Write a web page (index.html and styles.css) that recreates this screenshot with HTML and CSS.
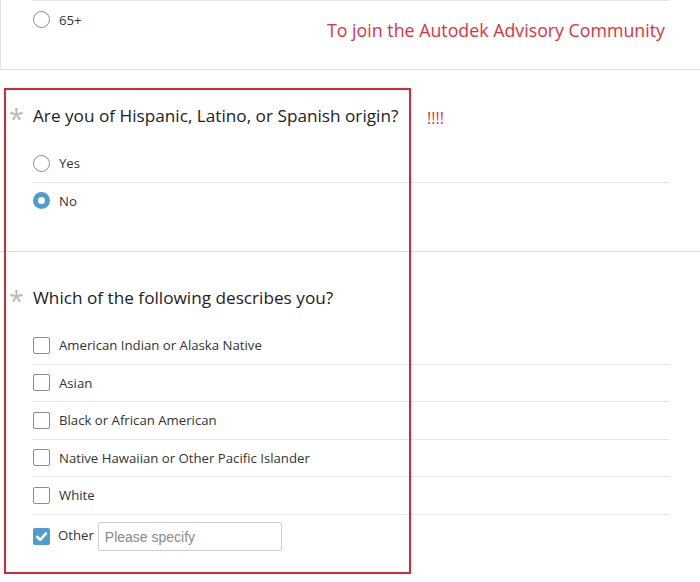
FILE: index.html
```html
<!DOCTYPE html>
<html lang="en">
<head>
<meta charset="utf-8">
<title>Survey</title>
<link rel="stylesheet" href="styles.css">
</head>
<body>
<div class="page">
  <section class="block block-top">
    <div class="options">
      <div class="opt opt-first opt-last"><span class="radio"></span><span class="label">65+</span></div>
    </div>
  </section>

  <section class="block block-q1">
    <h2 class="question"><span class="req">*</span>Are you of Hispanic, Latino, or Spanish origin?</h2>
    <div class="options">
      <div class="opt"><span class="radio"></span><span class="label">Yes</span></div>
      <div class="opt opt-last"><span class="radio radio-on"></span><span class="label">No</span></div>
    </div>
  </section>

  <section class="block block-q2">
    <h2 class="question"><span class="req">*</span>Which of the following describes you?</h2>
    <div class="options">
      <div class="opt"><span class="check"></span><span class="label">American Indian or Alaska Native</span></div>
      <div class="opt"><span class="check"></span><span class="label">Asian</span></div>
      <div class="opt"><span class="check"></span><span class="label">Black or African American</span></div>
      <div class="opt"><span class="check"></span><span class="label">Native Hawaiian or Other Pacific Islander</span></div>
      <div class="opt"><span class="check"></span><span class="label">White</span></div>
      <div class="opt opt-last opt-other">
        <span class="check check-on"><svg viewBox="0 0 17 17" width="17" height="17"><path d="M4 8.8 L7.2 11.8 L13 5.4" fill="none" stroke="#fff" stroke-width="2.6" stroke-linecap="round" stroke-linejoin="round"/></svg></span>
        <span class="label label-other">Other</span>
        <input class="specify" type="text" placeholder="Please specify">
      </div>
    </div>
  </section>

  <p class="note note-join">To join the Autodek Advisory Community</p>
  <p class="note note-bang">!!!!</p>
  <div class="highlight"></div>
</div>
</body>
</html>
```

FILE: styles.css
```css
html, body {
  margin: 0;
  padding: 0;
  background: #fff;
}
body {
  font-family: "Open Sans", "Noto Sans", "Liberation Sans", sans-serif;
  color: #333;
}
.page {
  position: relative;
  width: 700px;
  height: 582px;
  overflow: hidden;
}
.block {
  border-bottom: 1px solid #dcdcdc;
  box-sizing: border-box;
}
.block-top {
  height: 70px;
  border-left: 1px solid #e3e3e3;
}
.block-top .options {
  margin-left: 31px;
}
.block-q1 {
  height: 182px;
  padding-top: 34px;
}
.block-q2 {
  border-bottom: none;
  padding-top: 34px;
}
.options {
  margin-left: 32px;
  width: 638px;
}
.opt {
  display: flex;
  align-items: center;
  height: 36.5px;
  border-bottom: 1px solid #e6e6e6;
  padding-left: 1px;
  font-size: 13.2px;
}
.opt-first {
  border-top: 1px solid #e6e6e6;
  height: 37px;
  align-items: flex-start;
  padding-top: 10px;
  box-sizing: border-box;
}
.opt-last {
  border-bottom: none;
}
.opt-other {
  height: 44px;
}
.radio {
  width: 15px;
  height: 15px;
  border: 1px solid #8c8c8c;
  border-radius: 50%;
  flex: none;
}
.radio-on {
  width: 7px;
  height: 7px;
  border: 5px solid #4e9cd1;
}
.check {
  width: 15px;
  height: 15px;
  border: 1px solid #8c8c8c;
  border-radius: 2px;
  flex: none;
  display: flex;
}
.check-on {
  width: 17px;
  height: 17px;
  border: none;
  background: #4e9cd1;
}
.label {
  margin-left: 9px;
  line-height: 18px;
}
.label-other {
  margin-left: 8px;
  margin-top: -4px;
}
.specify {
  margin-left: 4px;
  width: 184px;
  height: 29px;
  box-sizing: border-box;
  border: 1px solid #cfcfcf;
  border-radius: 2px;
  padding: 0 6px;
  font-family: "Liberation Sans", Arial, sans-serif;
  font-size: 14px;
  color: #333;
  outline: none;
}
.specify::placeholder {
  color: #8a8a8a;
}
.question {
  margin: 0 0 17px 0;
  font-weight: normal;
  font-size: 17.2px;
  line-height: 24px;
  padding-left: 33px;
  position: relative;
  color: #222;
}
.req {
  position: absolute;
  left: 9px;
  top: 3px;
  color: #bbb;
  font-size: 27px;
  line-height: 24px;
}
.note {
  position: absolute;
  margin: 0;
  color: #e0323c;
  font-size: 17.8px;
  line-height: 24px;
}
.note-join {
  left: 327px;
  top: 18px;
}
.note-bang {
  left: 427px;
  top: 106px;
  font-size: 16px;
}
.highlight {
  position: absolute;
  left: 4px;
  top: 88px;
  width: 403px;
  height: 482px;
  border: 2px solid #d52834;
  pointer-events: none;
}
```
